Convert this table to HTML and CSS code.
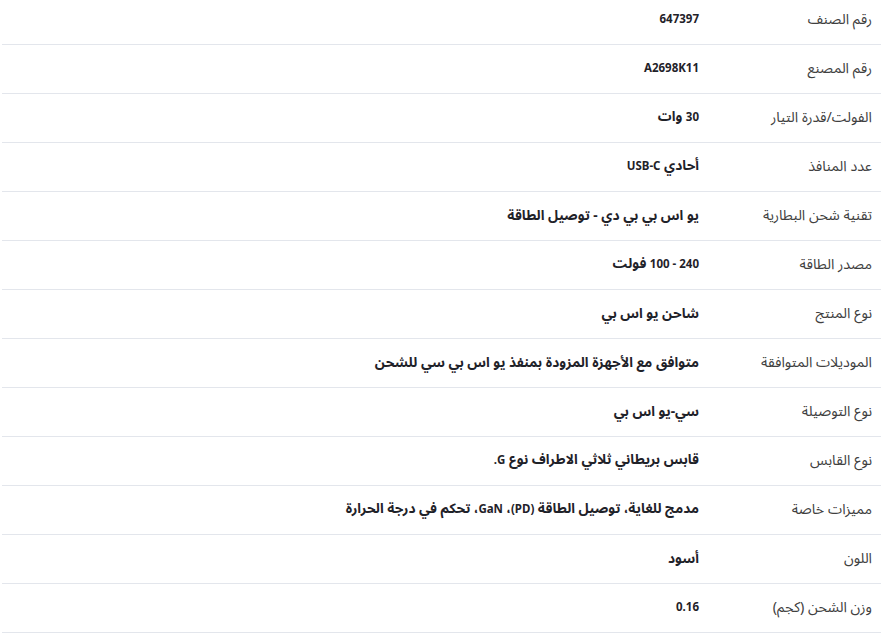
FILE: index.html
```html
<!DOCTYPE html>
<html lang="ar" dir="rtl">
<head>
<meta charset="utf-8">
<link rel="stylesheet" href="styles.css">
</head>
<body>
<div class="specs">
  <div class="row"><div class="label">رقم الصنف</div><div class="value"><span class="lat">647397</span></div></div>
  <div class="row"><div class="label">رقم المصنع</div><div class="value"><span class="lat">A2698K11</span></div></div>
  <div class="row"><div class="label">الفولت/قدرة التيار</div><div class="value"><span class="lat">30</span> وات</div></div>
  <div class="row"><div class="label">عدد المنافذ</div><div class="value">أحادي <span class="lat">USB-C</span></div></div>
  <div class="row"><div class="label">تقنية شحن البطارية</div><div class="value">يو اس بي بي دي - توصيل الطاقة</div></div>
  <div class="row"><div class="label">مصدر الطاقة</div><div class="value"><span class="lat">240 - 100</span> فولت</div></div>
  <div class="row"><div class="label">نوع المنتج</div><div class="value">شاحن يو اس بي</div></div>
  <div class="row"><div class="label">الموديلات المتوافقة</div><div class="value">متوافق مع الأجهزة المزودة بمنفذ يو اس بي سي للشحن</div></div>
  <div class="row"><div class="label">نوع التوصيلة</div><div class="value">سي-يو اس بي</div></div>
  <div class="row"><div class="label">نوع القابس</div><div class="value">قابس بريطاني ثلاثي الاطراف نوع <span class="lat">G.</span></div></div>
  <div class="row"><div class="label">مميزات خاصة</div><div class="value">مدمج للغاية، توصيل الطاقة <span class="lat">(PD)</span>، <span class="lat">GaN</span>، تحكم في درجة الحرارة</div></div>
  <div class="row"><div class="label">اللون</div><div class="value">أسود</div></div>
  <div class="row"><div class="label">وزن الشحن (كجم)</div><div class="value"><span class="lat">0.16</span></div></div>
</div>
</body>
</html>
```
FILE: styles.css
```css
html, body {
  margin: 0;
  padding: 0;
  background: #ffffff;
}
body {
  font-family: "Noto Sans", "Noto Sans Arabic", "DejaVu Sans", sans-serif;
  font-size: 12px;
}
.specs {
  margin-top: -4px;
  padding: 0 1px 0 2px;
}
.row {
  display: grid;
  grid-template-columns: 172px 1fr;
  box-sizing: border-box;
  height: 49px;
  padding-bottom: 3px;
  align-items: center;
  border-bottom: 1px solid #e3e6ec;
}
.label {
  padding-right: 9px;
  color: #404040;
  font-size: 14.3px;
  line-height: 20px;
}
.value {
  padding-right: 10px;
  color: #1f2229;
  font-weight: 700;
  font-size: 13.7px;
  line-height: 20px;
}
.lat {
  font-size: 11.5px;
}
```
